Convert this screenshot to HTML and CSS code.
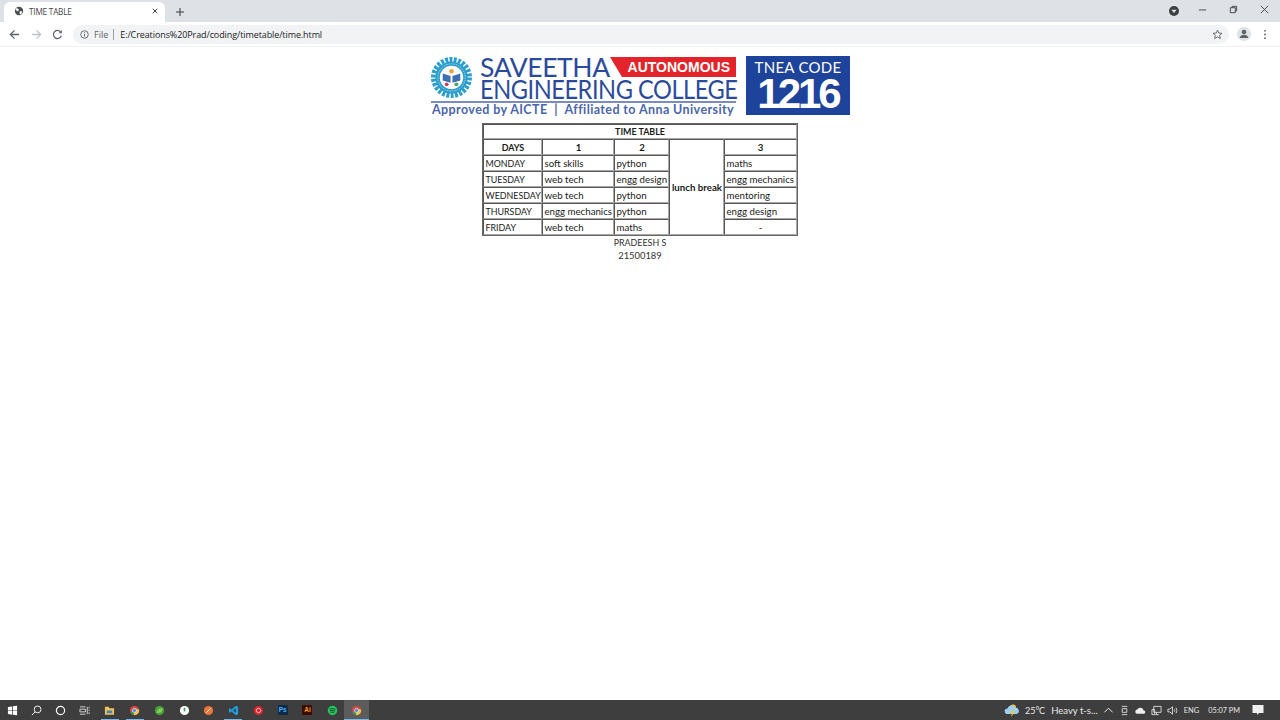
FILE: index.html
```html
<!DOCTYPE html>
<html lang="en">
<head>
<meta charset="utf-8">
<title>TIME TABLE</title>
<link rel="stylesheet" href="styles.css">
</head>
<body>
<div class="window">
  <div class="tabstrip">
    <div class="tab">
      <svg class="favicon" viewBox="0 0 12 12"><circle cx="6" cy="6" r="5" fill="#4a4d51"/><path d="M3 2.500l2.500 1.200.2 1.800-1.600.7-2.400-1.600zM7 6l2.800.6-.6 2.400-1.800 1.400-.7-2.200z" fill="#fff"/></svg>
      <span class="tab-title">TIME TABLE</span>
      <svg class="tab-close" viewBox="0 0 8 8"><path d="M1 1l6 6M7 1L1 7" stroke="#3c4043" stroke-width="1.3"/></svg>
    </div>
    <svg class="newtab" viewBox="0 0 10 10"><path d="M5 0v10M0 5h10" stroke="#3c4043" stroke-width="1.3"/></svg>
    <div class="strip-spacer"></div>
    <svg class="media" viewBox="0 0 10 10"><circle cx="5" cy="5" r="5" fill="#3c4043"/><path d="M2.400 3.800h5.200L5 7z" fill="#dee1e6"/></svg>
    <div class="winctl">
      <svg viewBox="0 0 10 10"><path d="M1 5.500h8" stroke="#3c4043"/></svg>
      <svg viewBox="0 0 10 10"><path d="M1.500 3h5.500v5.500H1.500zM3.500 3V1.500h5v5H7" fill="none" stroke="#3c4043"/></svg>
      <svg viewBox="0 0 10 10"><path d="M1 1l8 8M9 1l-8 8" stroke="#3c4043"/></svg>
    </div>
  </div>
  <div class="toolbar">
    <svg class="tool" viewBox="0 0 12 12"><path d="M11 6H2M6 1.500L1.500 6 6 10.500" fill="none" stroke="#5f6368" stroke-width="1.400"/></svg>
    <svg class="tool" viewBox="0 0 12 12"><path d="M1 6h9M6 1.500L10.500 6 6 10.500" fill="none" stroke="#bdc1c6" stroke-width="1.400"/></svg>
    <svg class="tool" viewBox="0 0 12 12"><path d="M10.200 7.200A4.400 4.400 0 1 1 9.200 3" fill="none" stroke="#5f6368" stroke-width="1.400"/><path d="M10.800 1v3.600H7.200z" fill="#5f6368"/></svg>
    <div class="omnibox">
      <svg class="info" viewBox="0 0 10 10"><circle cx="5" cy="5" r="4.200" fill="none" stroke="#5f6368"/><path d="M5 4.400v3M5 2.400v1.100" stroke="#5f6368"/></svg>
      <span class="scheme">File</span>
      <span class="sep"></span>
      <span class="url">E:/Creations%20Prad/coding/timetable/time.html</span>
      <svg class="star" viewBox="0 0 12 12"><path d="M6 1.200l1.400 3.200 3.500.3-2.600 2.300.8 3.400-3.100-1.800-3.100 1.800.8-3.400L1.100 4.700l3.500-.3z" fill="none" stroke="#5f6368"/></svg>
    </div>
    <div class="avatar"><svg viewBox="0 0 14 14"><circle cx="7" cy="5" r="2.300" fill="#5f6368"/><path d="M2.600 11c.5-2.400 2.400-3.200 4.400-3.200s3.900.8 4.400 3.200z" fill="#5f6368"/></svg></div>
    <svg class="kebab" viewBox="0 0 4 12"><circle cx="2" cy="2" r="1" fill="#5f6368"/><circle cx="2" cy="6" r="1" fill="#5f6368"/><circle cx="2" cy="10" r="1" fill="#5f6368"/></svg>
  </div>
  <main class="page">
    <div class="logo">
      <div class="logo-main">
        <div class="brand">
          <svg class="gear" viewBox="0 0 42 42">
            <circle cx="21" cy="21" r="18.500" fill="none" stroke="#2a9fce" stroke-width="5" stroke-dasharray="3 1.450"/>
            <circle cx="21" cy="21" r="16.500" fill="#2a9ccb"/>
            <circle cx="21" cy="21" r="12" fill="#fff"/>
            <circle cx="21" cy="21" r="14" fill="none" stroke="#cfe8f3" stroke-width=".8" stroke-dasharray="1.500 1"/>
            <path d="M12 17l8 2.500v7l-8-2.500zM30 17l-8 2.500v7l8-2.500z" fill="#3c6fb4"/>
            <circle cx="21" cy="14.500" r="2.300" fill="#e9a23b"/>
            <circle cx="16" cy="28" r="2" fill="#c6456b"/>
            <circle cx="26" cy="28" r="2" fill="#4aa564"/>
          </svg>
          <div class="college">
            <div class="college-top">
              <span class="saveetha">SAVEETHA</span>
              <span class="autonomous">AUTONOMOUS</span>
            </div>
            <div class="engg"><span class="engg-text">ENGINEERING COLLEGE</span></div>
          </div>
        </div>
        <div class="rule"></div>
        <div class="approved">Approved by AICTE &nbsp;|&nbsp; Affiliated to Anna University</div>
      </div>
      <div class="tnea">
        <span class="tnea-label">TNEA CODE</span>
        <span class="tnea-code">1216</span>
      </div>
    </div>
    <table class="timetable">
      <colgroup><col class="c-day"><col class="c-one"><col class="c-two"><col class="c-lunch"><col class="c-three"></colgroup>
      <tr class="title-row"><th colspan="5" class="caps">TIME TABLE</th></tr>
      <tr><th class="caps">DAYS</th><th>1</th><th>2</th><th rowspan="6">lunch break</th><th>3</th></tr>
      <tr><td class="caps">MONDAY</td><td>soft skills</td><td>python</td><td>maths</td></tr>
      <tr><td class="caps">TUESDAY</td><td>web tech</td><td>engg design</td><td>engg mechanics</td></tr>
      <tr><td class="caps">WEDNESDAY</td><td>web tech</td><td>python</td><td>mentoring</td></tr>
      <tr><td class="caps">THURSDAY</td><td>engg mechanics</td><td>python</td><td>engg design</td></tr>
      <tr><td class="caps">FRIDAY</td><td>web tech</td><td>maths</td><td class="center">-</td></tr>
    </table>
    <p class="credit"><span class="caps">PRADEESH S</span><br>21500189</p>
  </main>
  <footer class="taskbar">
    <div class="task-left">
      <span class="tb"><svg class="ico" viewBox="0 0 12 12"><path d="M1 2.200l4.500-.7v4.200H1zM6.300 1.400L11 .7v5H6.300zM1 6.400h4.500v4.100L1 9.800zM6.300 6.400H11v4.900l-4.700-.7z" fill="#fff"/></svg></span>
      <span class="tb"><svg class="ico" viewBox="0 0 12 12"><circle cx="7.200" cy="4.800" r="3.700" fill="none" stroke="#fff"/><path d="M4.500 7.500L1 11" stroke="#fff"/></svg></span>
      <span class="tb"><svg class="ico" viewBox="0 0 12 12"><circle cx="6" cy="6" r="4.500" fill="none" stroke="#fff" stroke-width="1.300"/></svg></span>
      <span class="tb"><svg class="ico" viewBox="0 0 12 12"><path d="M1 2h6M1 10h6M1 4.500h6v3H1zM9 2v8M11 2v1.500M11 5v1.500M11 8v2" fill="none" stroke="#ddd"/></svg></span>
      <span class="tb active"><svg class="ico" viewBox="0 0 12 12"><path d="M1 2h4l1 1.500h5V10.500H1z" fill="#f2c14e"/><path d="M3 6h6v3H3z" fill="#3f86c6"/></svg></span>
      <span class="tb active"><svg class="ico" viewBox="0 0 12 12"><circle cx="6" cy="6" r="5" fill="#dd4b3e"/><path d="M6 6L1.700 8.500A5 5 0 0 0 7 11z" fill="#2f9e52"/><path d="M6 6l-.6 5A5 5 0 0 0 11 5L6 4z" fill="#f5c242"/><circle cx="6" cy="6" r="2.200" fill="#4c8bf5" stroke="#eee" stroke-width=".7"/></svg></span>
      <span class="tb"><svg class="ico" viewBox="0 0 12 12"><circle cx="6" cy="6" r="5" fill="#46a23d"/><path d="M3 8.500C3 5 6 3.500 9.500 3.500 9.500 7 7 9.500 3 8.500z" fill="#8ccb52"/></svg></span>
      <span class="tb"><svg class="ico" viewBox="0 0 12 12"><circle cx="6" cy="6" r="5" fill="#fff"/><path d="M6 3v4" stroke="#2f9e60" stroke-width="1.800"/></svg></span>
      <span class="tb"><svg class="ico" viewBox="0 0 12 12"><circle cx="6" cy="6" r="5" fill="#ee7437"/><path d="M3.500 8.500L8.500 3.500" stroke="#fff" stroke-width="1"/></svg></span>
      <span class="tb active"><svg class="ico" viewBox="0 0 12 12"><path d="M8.500 .8L11 2v8L8.500 11.200 3.800 7 1.800 8.500 1 8V4l.8-.5 2 1.500z" fill="#1f9ce0"/><path d="M8.500 3.800L5.500 6l3 2.200z" fill="#3d3d3d"/></svg></span>
      <span class="tb"><svg class="ico" viewBox="0 0 12 12"><circle cx="6" cy="6" r="5" fill="#e5222b"/><circle cx="6" cy="6" r="2.400" fill="none" stroke="#fff" stroke-width=".8"/></svg></span>
      <span class="tb"><span class="app ps">Ps</span></span>
      <span class="tb"><span class="app ai">Ai</span></span>
      <span class="tb"><svg class="ico" viewBox="0 0 12 12"><circle cx="6" cy="6" r="5.200" fill="#24c45c"/><path d="M2.800 4.400c2-.6 4.400-.4 6.400.6M3.200 6.200c1.800-.4 3.800-.2 5.400.6M3.600 7.900c1.500-.3 3-.1 4.300.5" fill="none" stroke="#222" stroke-width=".8"/></svg></span>
      <span class="tb current"><svg class="ico" viewBox="0 0 12 12"><circle cx="6" cy="6" r="5" fill="#dd4b3e"/><path d="M6 6L1.700 8.500A5 5 0 0 0 7 11z" fill="#2f9e52"/><path d="M6 6l-.6 5A5 5 0 0 0 11 5L6 4z" fill="#f5c242"/><circle cx="6" cy="6" r="2.200" fill="#4c8bf5" stroke="#eee" stroke-width=".7"/></svg></span>
    </div>
    <div class="task-right">
      <svg class="weather" viewBox="0 0 16 13"><circle cx="9" cy="3.500" r="3" fill="#f4c542"/><path d="M3.500 10a2.800 2.800 0 0 1 0-5.600 4 4 0 0 1 7.500-.4A3 3 0 0 1 12.500 10z" fill="#9bd0f2"/><path d="M8 6L6 9.500h2L7 13l3.500-4.500H8.600L9.800 6z" fill="#f4c542"/></svg>
      <span class="temp">25°C</span>
      <span class="cond">Heavy t-s...</span>
      <svg class="tray" viewBox="0 0 12 12"><path d="M1.500 8L6 3.500 10.500 8" fill="none" stroke="#fff"/></svg>
      <svg class="tray" viewBox="0 0 12 12"><path d="M3 1.500h6M3 10.500h6M3.500 4h5v4h-5z" fill="none" stroke="#ddd"/></svg>
      <svg class="tray" viewBox="0 0 12 12"><path d="M2 9.500a2.300 2.300 0 0 1 .4-4.500 3.800 3.800 0 0 1 7 1A1.800 1.800 0 0 1 10 9.500z" fill="#eee"/></svg>
      <svg class="tray" viewBox="0 0 12 12"><path d="M3 1.500h8v6.500H3zM1 5h3v5.500H1zM6 8v2.500M4.500 10.500h4" fill="none" stroke="#ddd"/></svg>
      <svg class="tray" viewBox="0 0 12 12"><path d="M1 4.500h2L6 2v8L3 7.500H1z" fill="none" stroke="#ddd"/><path d="M8 4.500c.6 1 .6 2 0 3M9.800 3c1.200 2 1.200 4 0 6" fill="none" stroke="#ddd"/></svg>
      <span class="lang">ENG</span>
      <span class="clock">05:07 PM</span>
      <svg class="notif" viewBox="0 0 12 12"><path d="M.5 1h11v8H7L5 11V9H.5z" fill="#eee"/></svg>
    </div>
  </footer>
</div>
</body>
</html>
```
FILE: styles.css
```css
html, body { margin: 0; padding: 0; }
body { width: 1280px; height: 720px; overflow: hidden; background: #fff; font-family: "Lato", "Liberation Sans", sans-serif; }
svg { display: block; flex: none; }
.window { display: flex; flex-direction: column; height: 720px; }

.tabstrip { display: flex; align-items: flex-end; height: 22px; background: #dee1e6; padding-left: 4px; flex: none; }
.tab { display: flex; align-items: center; width: 161px; height: 20px; background: #fff; border-radius: 6px 6px 0 0; padding: 0 6px 2px 10px; box-sizing: border-box; }
.favicon { width: 10px; height: 10px; margin-right: 5px; }
.tab-title { flex: 1; font-size: 8.2px; color: #45484c; font-family: "Open Sans", sans-serif; letter-spacing: -0.2px; }
.tab-close { width: 6px; height: 6px; margin-right: 1px; }
.newtab { width: 8px; height: 8px; margin: 0 0 6px 11px; }
.strip-spacer { flex: 1; }
.media { width: 10px; height: 10px; margin: 0 19px 6px 0; }
.winctl { display: flex; gap: 22px; padding-right: 11px; margin-bottom: 8px; }
.winctl svg { width: 9px; height: 9px; }

.toolbar { display: flex; align-items: center; height: 24px; flex: none; border-bottom: 1px solid #f0f1f3; padding-left: 9px; background: #fff; }
.tool { width: 11px; height: 11px; margin-right: 11px; }
.toolbar .tool:nth-child(2) { margin-right: 10px; }
.toolbar .tool:nth-child(3) { margin-right: 10px; }
.omnibox { display: flex; align-items: center; width: 1156px; height: 19px; border-radius: 10px; background: #f1f3f4; padding: 0 6px 0 7px; box-sizing: border-box; }
.info { width: 9px; height: 9px; margin-right: 5px; }
.scheme { font-size: 9px; color: #5f6368; font-family: "Open Sans", sans-serif; }
.sep { width: 1px; height: 11px; background: #9aa0a6; margin: 0 6px 0 5px; }
.url { flex: 1; font-size: 9px; letter-spacing: -0.1px; color: #202124; font-family: "Open Sans", sans-serif; }
.star { width: 11px; height: 11px; }
.avatar { width: 14px; height: 14px; border-radius: 50%; background: #dee1e6; margin-left: 8px; }
.avatar svg { width: 14px; height: 14px; }
.kebab { width: 4px; height: 11px; margin-left: 12px; }

.page { flex: 1; display: flex; flex-direction: column; align-items: center; padding-top: 9px; color: #111; min-height: 0; }
.logo { display: flex; align-items: flex-start; width: 420px; height: 60px; margin-bottom: 7px; }
.logo-main { display: flex; flex-direction: column; width: 306px; }
.brand { display: flex; height: 45px; }
.gear { width: 41px; height: 41px; margin: 1px 8px 0 1px; }
.college { display: flex; flex-direction: column; width: 256px; color: #2b4a9b; }
.college-top { display: flex; height: 22px; align-items: flex-start; }
.saveetha { font-size: 26.5px; line-height: 22px; letter-spacing: -0.4px; width: 130px; white-space: nowrap; }
.autonomous { width: 126px; height: 20px; margin-top: 1px; background: #e3252b; color: #fff; font: bold 14px/20px "Liberation Sans", sans-serif; text-align: right; padding-right: 6px; box-sizing: border-box; clip-path: polygon(0 0, 100% 0, 100% 100%, 12px 100%); white-space: nowrap; }
.engg { height: 22px; }
.engg-text { display: inline-block; font-size: 26.5px; line-height: 22px; white-space: nowrap; letter-spacing: -0.5px; transform: scaleX(.89); transform-origin: left center; }
.rule { height: 1.5px; margin-left: 1px; background: #7a8cc0; }
.approved { font-size: 12.5px; line-height: 13px; margin-left: 2px; white-space: nowrap; letter-spacing: .4px; font-weight: 700; color: #4a66ab; }
.tnea { display: flex; flex-direction: column; align-items: center; width: 104px; height: 59px; margin-left: 10px; background: #1e439b; color: #fff; }
.tnea-label { font-size: 15px; line-height: 22px; letter-spacing: .3px; }
.tnea-code { font: bold 42px/32px "Liberation Sans", sans-serif; letter-spacing: -3px; }

.timetable { border-collapse: separate; border-spacing: 0; table-layout: fixed; width: 315px; border: 1px solid #666; font-size: 9.7px; line-height: 14px; color: #1a1a1a; background: #fff; }
.c-day { width: 59px; }
.c-one { width: 72px; }
.c-two { width: 55px; }
.c-lunch { width: 55px; }
.c-three { width: 72px; }
.timetable th, .timetable td { border: 1px solid; border-color: #555 #a8a8a8 #a8a8a8 #555; padding: 0 1px; white-space: nowrap; height: 14px; box-sizing: content-box; }
.timetable th { text-align: center; font-weight: 700; }
.timetable td { text-align: left; }
.timetable td.center { text-align: center; }
.timetable td.caps, .timetable th.caps { font-size: 8.9px; padding-top: 1px; height: 13px; line-height: 13px; }
.timetable .title-row th.caps { height: 12px; line-height: 12px; padding-top: 1px; }
.credit .caps { font-size: 8.9px; }
.credit { margin: 0; text-align: center; font-size: 9.4px; line-height: 13px; color: #333; }

.taskbar { display: flex; justify-content: space-between; height: 20px; flex: none; background: #3e3e3e; color: #e8e8e8; }
.task-left { display: flex; }
.tb { display: flex; align-items: center; justify-content: center; width: 24.7px; height: 20px; box-sizing: border-box; }
.tb:nth-child(-n+4) { width: 24px; }
.tb:nth-child(5) { margin-left: 1.6px; }
.tb.active { background: linear-gradient(#76b9ed, #76b9ed) center bottom / 18px 1.5px no-repeat; }
.tb.current { background: linear-gradient(#76b9ed, #76b9ed) center bottom / 100% 1.5px no-repeat, #5c5c5c; }
.ico { width: 11px; height: 11px; }
.app { display: block; width: 10px; height: 10px; font: bold 6.5px/10px "Liberation Sans", sans-serif; text-align: center; border-radius: 1px; }
.ps { background: #0c2a4a; color: #4fb1f5; }
.ai { background: #3a0d00; color: #f79a1e; }
.task-right { display: flex; align-items: center; padding-right: 16px; }
.weather { width: 16px; height: 13px; margin-right: 5px; }
.temp { font-size: 9px; margin-right: 6px; }
.cond { font-size: 9.5px; margin-right: 5px; }
.tray { width: 11px; height: 11px; margin-right: 5px; }
.lang { font-size: 7.5px; margin: 0 9px 0 1px; }
.clock { font-size: 7.3px; margin-right: 12px; }
.notif { width: 12px; height: 12px; }
```
